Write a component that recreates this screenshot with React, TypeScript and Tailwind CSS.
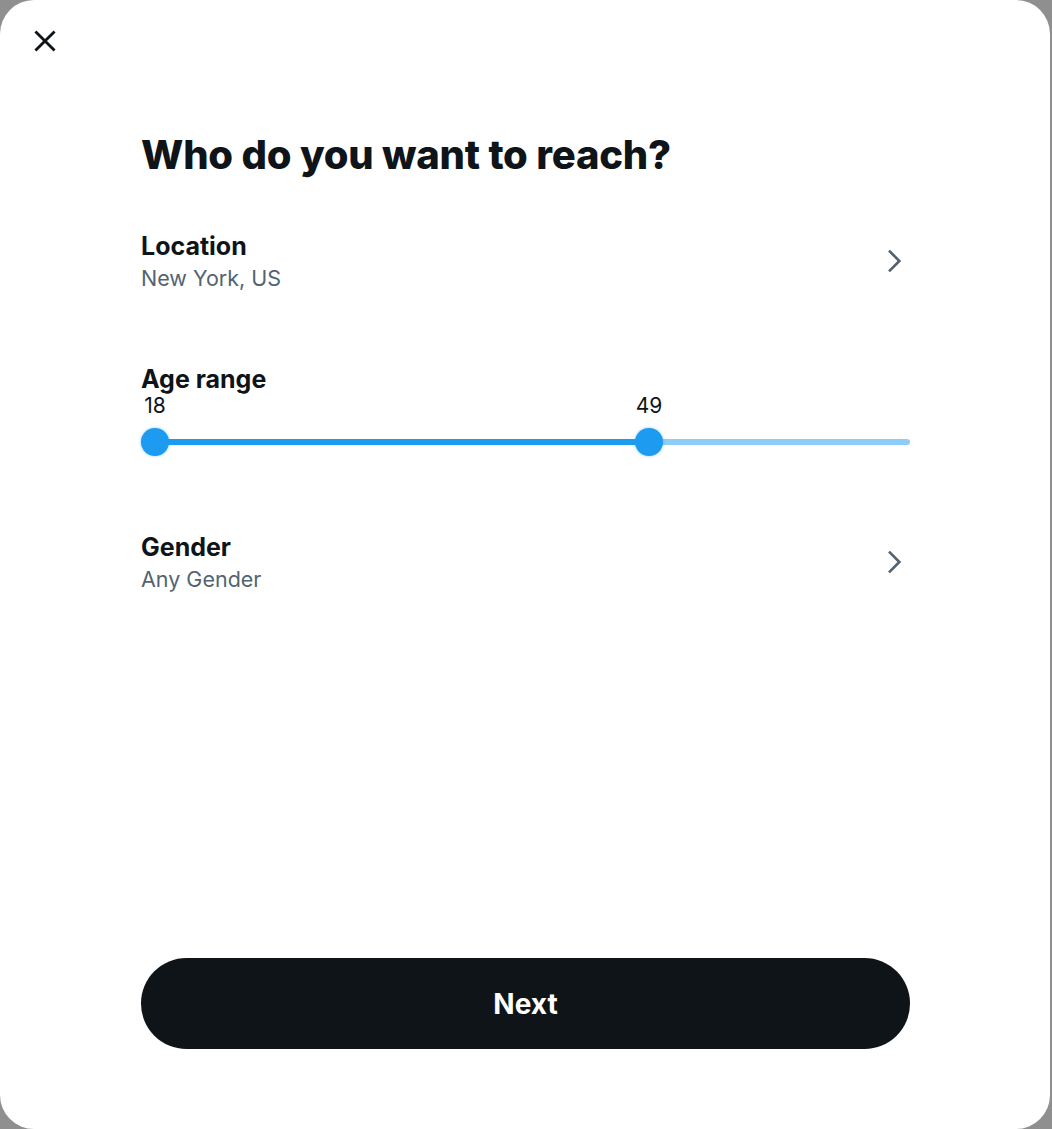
import React from 'react';

const MIN_AGE = 18;
const MAX_AGE = 64.5;

const Chevron = () => (
  <svg viewBox="0 0 24 24" className="w-[32px] h-[32px] fill-[#536471] shrink-0 -mt-[3px]">
    <path d="M14.586 12L7.543 4.96l1.414-1.42L17.414 12l-8.457 8.46-1.414-1.42L14.586 12z" />
  </svg>
);

const OptionRow = ({ label, value }: { label: string; value: string }) => (
  <div className="flex items-center justify-between cursor-pointer">
    <div className="flex flex-col">
      <span className="text-[25px] leading-[28px] font-bold text-[#0f1419]">{label}</span>
      <span className="text-[21.5px] leading-[28px] text-[#536471] mt-[4px]">{value}</span>
    </div>
    <Chevron />
  </div>
);

const AgeRange = ({ from, to }: { from: number; to: number }) => {
  const pct = (v: number) => ((v - MIN_AGE) / (MAX_AGE - MIN_AGE)) * 100;
  // thumbs sit inside the track, inset by their radius
  const pos = (v: number) => `calc(14px + (100% - 28px) * ${pct(v) / 100})`;

  return (
    <div className="flex flex-col">
      <span className="text-[25px] leading-[28px] font-bold text-[#0f1419]">Age range</span>
      <div className="relative mt-[3px] h-[20px] text-[21px] leading-[20px] text-[#0f1419]">
        <span className="absolute -translate-x-1/2" style={{ left: pos(from) }}>{from}</span>
        <span className="absolute -translate-x-1/2" style={{ left: pos(to) }}>{to}</span>
      </div>
      <div className="relative h-[28px] mt-[12px] flex items-center">
        <div className="w-full h-[6px] rounded-full bg-[#8ecdf8]" />
        <div
          className="absolute h-[6px] bg-[#1d9bf0]"
          style={{ left: pos(from), width: `calc((100% - 28px) * ${(pct(to) - pct(from)) / 100})` }}
        />
        <div className="absolute w-[28px] h-[28px] -translate-x-1/2 rounded-full bg-[#1d9bf0] shadow-[0_0_3px_rgba(29,155,240,0.5)]" style={{ left: pos(from) }} />
        <div className="absolute w-[28px] h-[28px] -translate-x-1/2 rounded-full bg-[#1d9bf0] shadow-[0_0_3px_rgba(29,155,240,0.5)]" style={{ left: pos(to) }} />
      </div>
    </div>
  );
};

export default function App() {
  return (
    <div className="min-h-screen bg-[#8f8f8f] font-['Inter','Liberation_Sans',sans-serif]">
      <div className="w-[1050px] h-[1129px] bg-white rounded-[34px] flex flex-col">
        <div className="pl-[28px] pt-[24px]">
          <button className="w-[34px] h-[34px] flex items-center justify-center">
            <svg viewBox="0 0 24 24" className="w-[34px] h-[34px] fill-[#0f1419]">
              <path d="M10.59 12L4.54 5.96l1.42-1.42L12 10.59l6.04-6.05 1.42 1.42L13.41 12l6.05 6.04-1.42 1.42L12 13.41l-6.04 6.05-1.42-1.42L10.59 12z" />
            </svg>
          </button>
        </div>

        <div className="flex-1 flex flex-col pl-[141px] pr-[140px]">
          <h1 className="mt-[73px] text-[40px] leading-[48px] font-extrabold text-[#0f1419] tracking-[-0.2px]">
            Who do you want to reach?
          </h1>

          <div className="mt-[53px]">
            <OptionRow label="Location" value="New York, US" />
          </div>

          <div className="mt-[73px]">
            <AgeRange from={18} to={49} />
          </div>

          <div className="mt-[77px]">
            <OptionRow label="Gender" value="Any Gender" />
          </div>

          <button className="mt-auto mb-[80px] h-[91px] w-full rounded-full bg-[#0f1419] text-white text-[28px] font-bold">
            Next
          </button>
        </div>
      </div>
    </div>
  );
}
